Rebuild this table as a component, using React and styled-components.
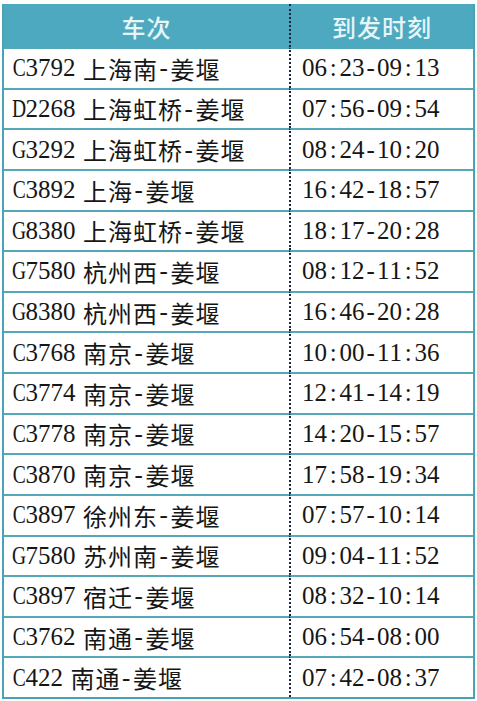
import React from "react";
import styled, { createGlobalStyle } from "styled-components";

const Global = createGlobalStyle`
  html, body { margin: 0; padding: 0; background: #ffffff; }
  body { font-family: "Liberation Serif", "Noto Sans CJK SC", serif; }
`;

const Page = styled.div`
  width: 477px;
  height: 701px;
  padding: 4px 2px 2px 2px;
  box-sizing: border-box;
  background: #fff;
`;

const Table = styled.div`
  display: grid;
  grid-template-columns: 285px 1fr;
  grid-template-rows: 43px repeat(16, 1fr);
  height: 695px;
  border: 2px solid #4ba2b5;
  border-top: none;
  box-sizing: border-box;
`;

const HeadCell = styled.div`
  background: #4ca9bf;
  color: #e6f5f7;
  font-family: "Noto Sans CJK SC", sans-serif;
  font-weight: 500;
  font-size: 24px;
  letter-spacing: 1px;
  display: flex;
  align-items: center;
  justify-content: center;
  border-left: ${(p) => (p.$divider ? "2px dotted #1b2445" : "none")};
  padding-top: 2px;
  box-sizing: border-box;
`;

const Cell = styled.div`
  display: flex;
  align-items: center;
  padding-left: ${(p) => (p.$divider ? "11px" : "9px")};
  border-top: 2px solid #55a8b9;
  border-left: ${(p) => (p.$divider ? "2px dotted #1b2445" : "none")};
  font-size: 25px;
  color: #161616;
  white-space: nowrap;
  box-sizing: border-box;
  padding-top: 0px;
`;

const Latin = styled.span`
  display: inline-flex;
  justify-content: center;
  width: 0.5em;
  font-family: "Liberation Serif", serif;
`;

const Letter = styled.span`
  display: inline-block;
  transform: scaleX(${(p) => p.$scale});
`;

const Gap = styled.span`
  display: inline-block;
  width: 7px;
`;

const Han = styled.span`
  font-family: "Noto Sans CJK SC", sans-serif;
  font-weight: 400;
  font-size: 24px;
  display: inline-block;
  width: 25px;
  text-align: center;
`;

const Mono = ({ text }) => (
  <>
    {Array.from(text).map((ch, i) => {
      if (ch === " ") return <Gap key={i} />;
      if (ch.charCodeAt(0) < 128) {
        const wide = /[A-Z]/.test(ch);
        return (
          <Latin key={i}>
            <Letter $scale={wide ? 0.78 : 1}>{ch}</Letter>
          </Latin>
        );
      }
      return <Han key={i}>{ch}</Han>;
    })}
  </>
);

const rows = [
  ["C3792 上海南-姜堰", "06:23-09:13"],
  ["D2268 上海虹桥-姜堰", "07:56-09:54"],
  ["G3292 上海虹桥-姜堰", "08:24-10:20"],
  ["C3892 上海-姜堰", "16:42-18:57"],
  ["G8380 上海虹桥-姜堰", "18:17-20:28"],
  ["G7580 杭州西-姜堰", "08:12-11:52"],
  ["G8380 杭州西-姜堰", "16:46-20:28"],
  ["C3768 南京-姜堰", "10:00-11:36"],
  ["C3774 南京-姜堰", "12:41-14:19"],
  ["C3778 南京-姜堰", "14:20-15:57"],
  ["C3870 南京-姜堰", "17:58-19:34"],
  ["C3897 徐州东-姜堰", "07:57-10:14"],
  ["G7580 苏州南-姜堰", "09:04-11:52"],
  ["C3897 宿迁-姜堰", "08:32-10:14"],
  ["C3762 南通-姜堰", "06:54-08:00"],
  ["C422 南通-姜堰", "07:42-08:37"],
];

export default function App() {
  return (
    <>
      <Global />
      <Page>
        <Table>
          <HeadCell>车次</HeadCell>
          <HeadCell $divider>到发时刻</HeadCell>
          {rows.map(([a, b], i) => (
            <React.Fragment key={i}>
              <Cell>
                <Mono text={a} />
              </Cell>
              <Cell $divider>
                <Mono text={b} />
              </Cell>
            </React.Fragment>
          ))}
        </Table>
      </Page>
    </>
  );
}
